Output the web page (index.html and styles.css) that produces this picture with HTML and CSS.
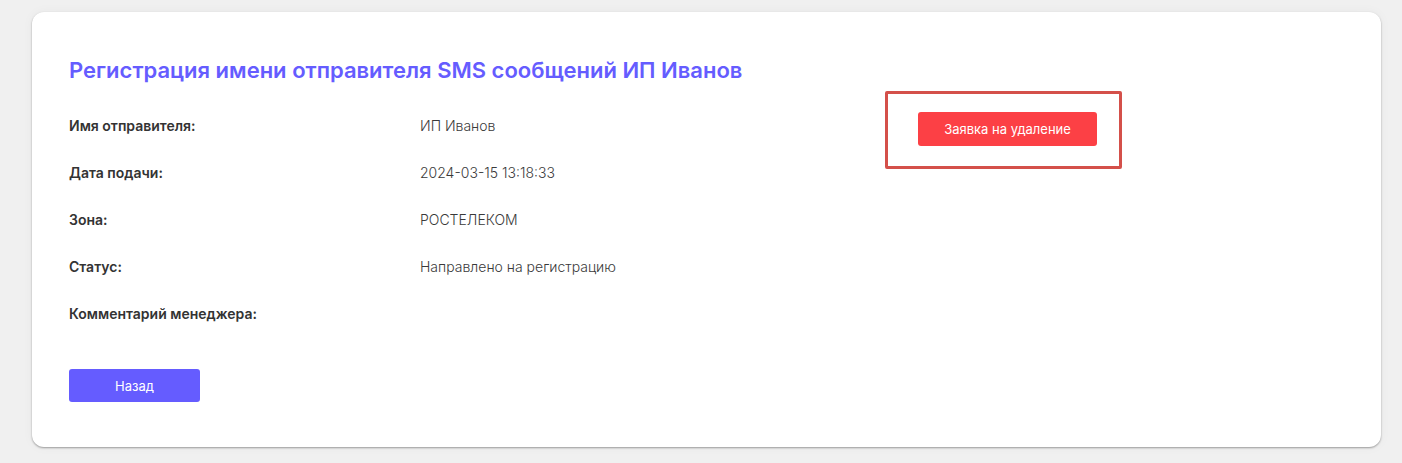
FILE: index.html
```html
<!DOCTYPE html>
<html lang="ru">
<head>
  <meta charset="UTF-8" />
  <meta name="viewport" content="width=device-width, initial-scale=1" />
  <title>Регистрация имени отправителя</title>
  <link rel="stylesheet" href="styles.css">
</head>
<body>
  <div class="card">
    <h1>Регистрация имени отправителя SMS сообщений ИП Иванов</h1>

    <div class="content">
      <div class="details">
        <div class="label">Имя отправителя:</div>
        <div class="value">ИП Иванов</div>

        <div class="label">Дата подачи:</div>
        <div class="value">2024-03-15 13:18:33</div>

        <div class="label">Зона:</div>
        <div class="value">РОСТЕЛЕКОМ</div>

        <div class="label">Статус:</div>
        <div class="value">Направлено на регистрацию</div>

        <div class="label">Комментарий менеджера:</div>
        <div class="value"></div>
      </div>

      <div class="actions">
        <button class="btn btn-danger">Заявка на удаление</button>
      </div>
    </div>

    <button class="btn btn-back">Назад</button>
  </div>
</body>
</html>
```

FILE: styles.css
```css
:root {
  --purple: #655cff;
  --red: #fc4045;
  --text-dark: #333;
  --bg-page: #f0f0f0;
}
body {
  margin: 0;
  padding: 12px 21px 16px 32px;
  background: var(--bg-page);
  font-family: 'Inter', 'Noto Sans', sans-serif;
  color: var(--text-dark);
}
.card {
  background: #fff;
  border-radius: 12px;
  box-shadow: 0 1px 2px rgba(0, 0, 0, 0.35), 0 0 12px rgba(0, 0, 0, 0.04);
  padding: 44px 37px 45px;
}
h1 {
  margin: 0 0 32px;
  font-size: 22px;
  line-height: 28px;
  font-weight: 600;
  color: var(--purple);
}
.content {
  display: flex;
  align-items: flex-start;
}
.details {
  display: grid;
  grid-template-columns: 351px 466px;
  row-gap: 27px;
  font-size: 14px;
  line-height: 20px;
}
.label {
  font-weight: 600;
}
.value {
  font-weight: 300;
  color: #3a3a3a;
}
.actions {
  margin-top: -25px;
  margin-left: -1px;
  padding: 18px 22px 20px 30px;
  border: 3px solid #d4504a;
  border-radius: 2px;
}
.btn {
  border: none;
  border-radius: 3px;
  color: #fff;
  font-family: inherit;
  font-size: 13px;
  cursor: pointer;
}
.btn-danger {
  background: var(--red);
  width: 179px;
  height: 34px;
}
.btn-back {
  background: var(--purple);
  width: 131px;
  height: 33px;
  margin-top: 45px;
}
```
